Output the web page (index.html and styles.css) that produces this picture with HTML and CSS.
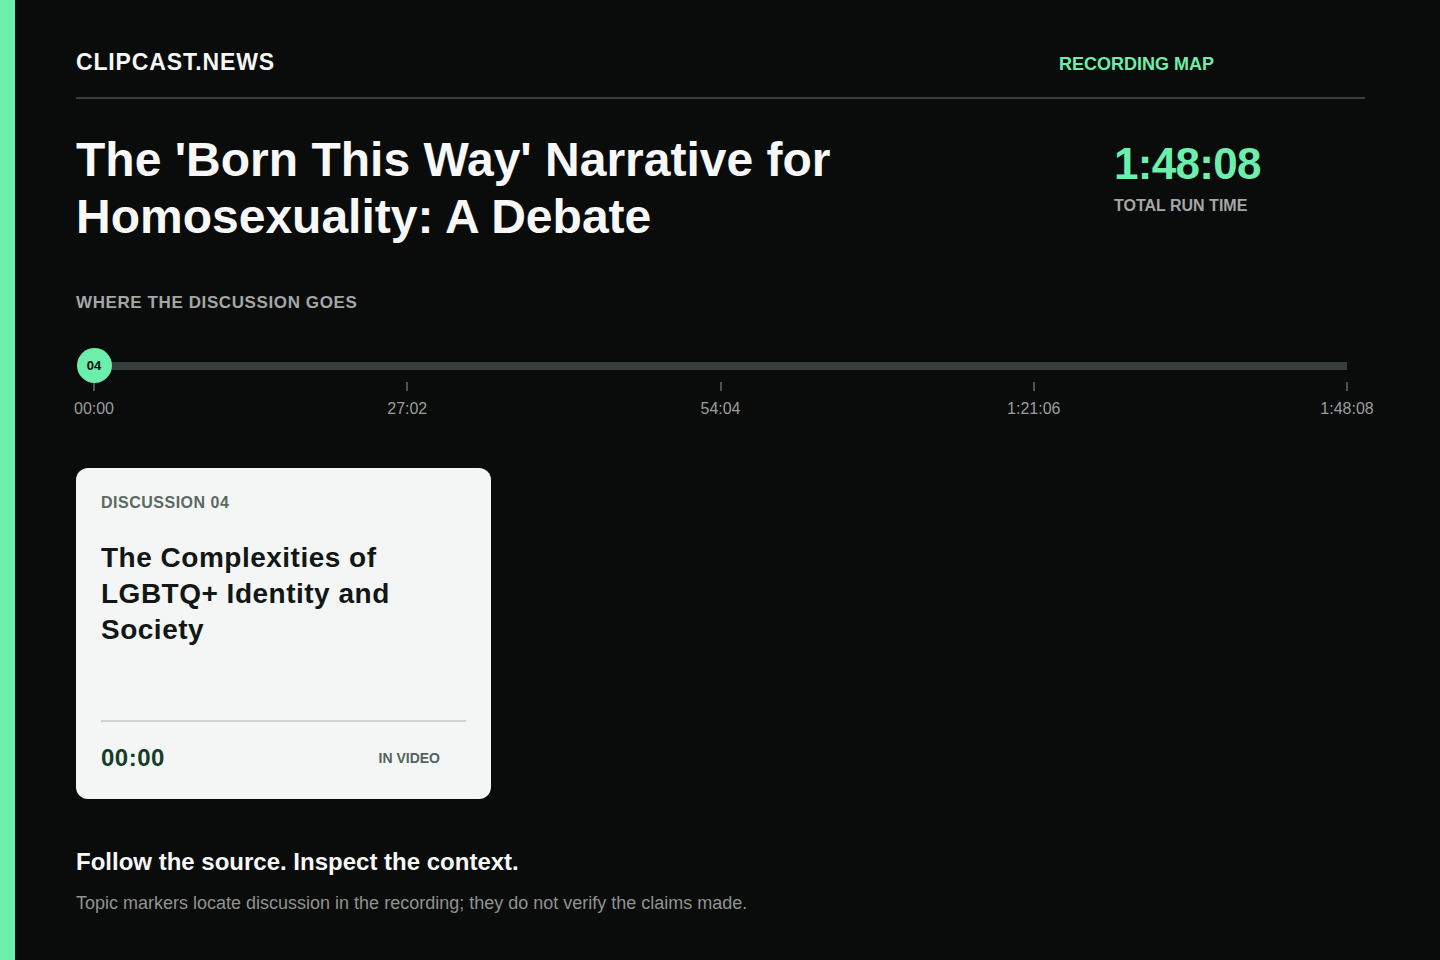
FILE: index.html
```html
<!DOCTYPE html>
<html lang="en">
<head>
<meta charset="utf-8">
<title>Clipcast.news — Recording Map</title>
<link rel="stylesheet" href="styles.css">
</head>
<body>
<div class="page">
  <main class="main">
    <header class="site-header">
      <div class="brand">CLIPCAST.NEWS</div>
      <nav class="nav">RECORDING MAP</nav>
    </header>

    <section class="hero">
      <h1 class="title">The 'Born This Way' Narrative for Homosexuality: A Debate</h1>
      <div class="runtime">
        <div class="runtime-value">1:48:08</div>
        <div class="runtime-label">TOTAL RUN TIME</div>
      </div>
    </section>

    <section class="map">
      <h2 class="section-label">WHERE THE DISCUSSION GOES</h2>
      <div class="timeline">
        <div class="track"></div>
        <div class="marker" style="left: 0%">04</div>
        <div class="tick" style="left: 0%"><span class="tick-label">00:00</span></div>
        <div class="tick" style="left: 25%"><span class="tick-label">27:02</span></div>
        <div class="tick" style="left: 50%"><span class="tick-label">54:04</span></div>
        <div class="tick" style="left: 75%"><span class="tick-label">1:21:06</span></div>
        <div class="tick" style="left: 100%"><span class="tick-label">1:48:08</span></div>
      </div>
    </section>

    <section class="cards">
      <article class="card">
        <div class="card-label">DISCUSSION 04</div>
        <h3 class="card-title">The Complexities of LGBTQ+ Identity and Society</h3>
        <div class="card-foot">
          <span class="card-time">00:00</span>
          <span class="card-where">IN VIDEO</span>
        </div>
      </article>
    </section>

    <footer class="site-footer">
      <p class="footer-head">Follow the source. Inspect the context.</p>
      <p class="footer-note">Topic markers locate discussion in the recording; they do not verify the claims made.</p>
    </footer>
  </main>
</div>
</body>
</html>
```

FILE: styles.css
```css
* { box-sizing: border-box; }

html, body {
  margin: 0;
  padding: 0;
  background: #0a0c0b;
}

body {
  font-family: "Liberation Sans", Arial, sans-serif;
  color: #f5f6f5;
}

.page {
  min-height: 960px;
  border-left: 15px solid #6cefab;
}

.main {
  padding: 0 75px 0 61px;
}

/* Header */
.site-header {
  display: flex;
  justify-content: space-between;
  align-items: baseline;
  padding-top: 49px;
  padding-bottom: 22px;
  border-bottom: 2px solid #3a3d3c;
}

.brand {
  font-size: 23px;
  font-weight: 700;
  letter-spacing: 0.85px;
  color: #f5f6f5;
  line-height: 1.15;
}

.nav {
  font-size: 18px;
  font-weight: 700;
  color: #6cefab;
  margin-right: 151px;
}

/* Hero */
.hero {
  display: grid;
  grid-template-columns: 1fr 251px;
  align-items: start;
  padding-top: 33px;
}

.title {
  margin: 0;
  font-size: 48px;
  line-height: 1.18;
  font-weight: 700;
  color: #f7f8f7;
  max-width: 900px;
}

.runtime {
  margin-top: 10px;
}

.runtime-value {
  font-size: 44px;
  line-height: 44px;
  font-weight: 700;
  letter-spacing: -0.7px;
  color: #6cefab;
}

.runtime-label {
  margin-top: 11px;
  font-size: 16px;
  font-weight: 700;
  color: #a3a7a5;
}

/* Map */
.map {
  padding-top: 47px;
}

.section-label {
  margin: 0;
  font-size: 17px;
  line-height: 1.15;
  font-weight: 700;
  letter-spacing: 0.6px;
  color: #a3a7a5;
}

.timeline {
  position: relative;
  margin: 36px 18px 0;
  padding-top: 14px;
  height: 71px;
}

.track {
  height: 8px;
  background: #373d39;
}

.marker {
  position: absolute;
  top: 0;
  width: 35px;
  height: 35px;
  margin-left: -17.5px;
  border-radius: 50%;
  background: #6cefab;
  color: #0a0c0b;
  font-size: 13px;
  font-weight: 700;
  display: flex;
  align-items: center;
  justify-content: center;
  z-index: 2;
}

.tick {
  position: absolute;
  top: 33.5px;
  width: 2px;
  height: 9px;
  margin-left: -1px;
  background: #4d534f;
}

.tick-label {
  position: absolute;
  top: 18.5px;
  left: 1px;
  transform: translateX(-50%);
  font-size: 16px;
  line-height: 1.15;
  color: #9a9e9b;
  white-space: nowrap;
}

/* Cards */
.cards {
  display: grid;
  grid-template-columns: repeat(3, 1fr);
  gap: 22px;
  padding-top: 49px;
}

.card {
  display: flex;
  flex-direction: column;
  min-height: 331px;
  padding: 26px 25px 27px;
  background: #f3f6f4;
  border-radius: 12px;
}

.card-label {
  font-size: 16px;
  line-height: 18px;
  font-weight: 700;
  letter-spacing: 0.5px;
  color: #5c6862;
}

.card-title {
  margin: 28px 0 0;
  font-size: 28px;
  line-height: 36px;
  font-weight: 700;
  letter-spacing: 0.5px;
  color: #121614;
}

.card-foot {
  margin-top: auto;
  display: flex;
  justify-content: space-between;
  align-items: center;
  padding-top: 22px;
  border-top: 2px solid #ccd6cf;
}

.card-time {
  font-size: 24px;
  font-weight: 700;
  letter-spacing: 0.5px;
  color: #153d28;
}

.card-where {
  margin-right: 26px;
  font-size: 14px;
  font-weight: 700;
  color: #56625b;
}

/* Footer */
.site-footer {
  padding-top: 49px;
}

.footer-head {
  margin: 0;
  font-size: 24px;
  line-height: 1.15;
  font-weight: 700;
  color: #f7f8f7;
}

.footer-note {
  margin: 17px 0 0;
  font-size: 18px;
  line-height: 1.15;
  color: #8f9391;
}
```
